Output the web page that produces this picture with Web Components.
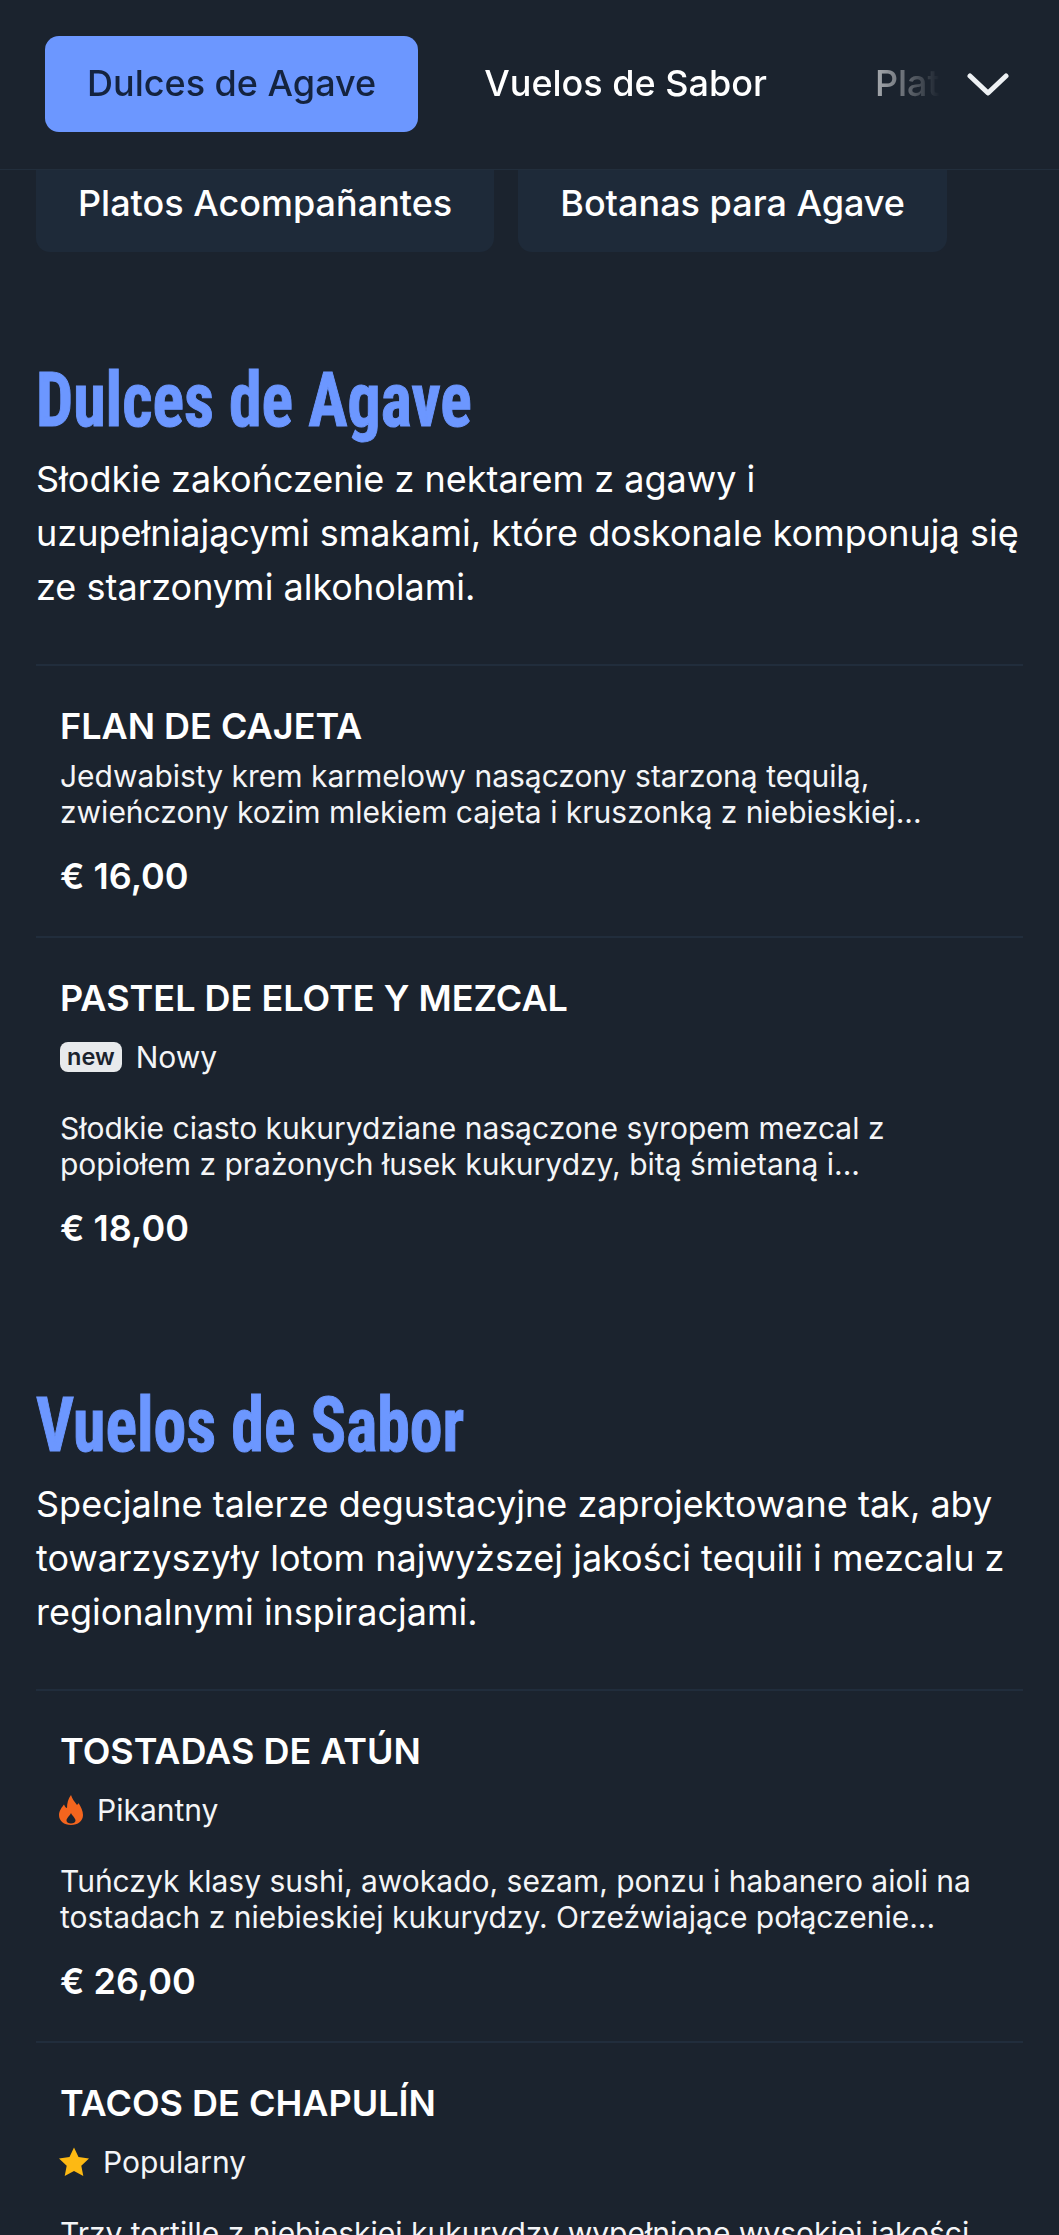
<!DOCTYPE html>
<html lang="pl"><head><meta charset="utf-8"><title>Menu</title>
<style>
html,body{margin:0;padding:0;background:#1b232e;height:2235px;overflow:hidden}
body{font-family:Inter,"Noto Sans",sans-serif;color:#fff}
</style></head><body>
<menu-page>
<nav-bar slot="nav">
  <nav-tab active>Dulces de Agave</nav-tab><nav-tab>Vuelos de Sabor</nav-tab><nav-tab>Platos Acompañantes</nav-tab>
</nav-bar>
<cat-chips slot="chips"><cat-chip>Platos Acompañantes</cat-chip><cat-chip>Botanas para Agave</cat-chip></cat-chips>
<menu-section heading="Dulces de Agave" intro="Słodkie zakończenie z nektarem z agawy i uzupełniającymi smakami, które doskonale komponują się ze starzonymi alkoholami.">
  <menu-item name="FLAN DE CAJETA" price="€ 16,00" desc="Jedwabisty krem karmelowy nasączony starzoną tequilą, zwieńczony kozim mlekiem cajeta i kruszonką z niebieskiej..."></menu-item>
  <menu-item name="PASTEL DE ELOTE Y MEZCAL" price="€ 18,00" tag="new" label="Nowy" desc="Słodkie ciasto kukurydziane nasączone syropem mezcal z popiołem z prażonych łusek kukurydzy, bitą śmietaną i..."></menu-item>
</menu-section>
<menu-section heading="Vuelos de Sabor" intro="Specjalne talerze degustacyjne zaprojektowane tak, aby towarzyszyły lotom najwyższej jakości tequili i mezcalu z regionalnymi inspiracjami.">
  <menu-item name="TOSTADAS DE ATÚN" price="€ 26,00" tag="fire" label="Pikantny" desc="Tuńczyk klasy sushi, awokado, sezam, ponzu i habanero aioli na tostadach z niebieskiej kukurydzy. Orzeźwiające połączenie..."></menu-item>
  <menu-item name="TACOS DE CHAPULÍN" price="€ 24,00" tag="star" label="Popularny" desc="Trzy tortille z niebieskiej kukurydzy wypełnione wysokiej jakości konikami polnymi, guacamole i salsą z chile morita..."></menu-item>
</menu-section>
</menu-page>
<script>
function def(name, html, init){
  customElements.define(name, class extends HTMLElement{
    constructor(){super();this.attachShadow({mode:'open'}).innerHTML=html;}
    connectedCallback(){ if(init) init(this,this.shadowRoot); }
  });
}
def('menu-page',`<style>
:host{display:block;position:relative;height:2235px;overflow:hidden;background:#1b232e}
.nav{position:absolute;left:0;top:0;right:0;z-index:2}
.body{padding:156px 36px 0}
</style><div class="nav"><slot name="nav"></slot></div><div class="body"><slot name="chips"></slot><slot></slot></div>`);
def('nav-bar',`<style>
:host{display:flex;align-items:center;height:169px;background:#1b232e;border-bottom:1px solid #222e3c;padding:0 0 0 45px}
.track{flex:1;min-width:0;display:flex;gap:24px;overflow:hidden;white-space:nowrap;margin-top:-2px;
 -webkit-mask-image:linear-gradient(90deg,#000 790px,transparent 895px);mask-image:linear-gradient(90deg,#000 790px,transparent 895px)}
svg{flex:none;width:42px;height:24px;margin:-2px 50px 0 27px;display:block}
</style><div class="track"><slot></slot></div><svg viewBox="0 0 42 24" fill="none" stroke="#eef1f4" stroke-width="5" stroke-linecap="round" stroke-linejoin="round"><path d="M3 4 L21 21 L39 4"/></svg>`);
def('nav-tab',`<style>
:host{flex:none;display:block;height:96px;padding:0 42px;border-radius:14px;font:500 36px/94px Inter,sans-serif;color:#fff}
:host([active]){background:#6c97ff;color:#14233f}
</style><slot></slot>`);
def('cat-chips',`<style>:host{display:flex;gap:24px;margin-bottom:11px}</style><slot></slot>`);
def('cat-chip',`<style>:host{display:block;flex:none;height:96px;padding:0 42px;border-radius:14px;background:#1e2a39;font:500 36px/94px Inter,sans-serif;color:#fff}</style><slot></slot>`);
def('menu-section',`<style>
:host{display:block;padding-top:93px}
h2{margin:0;color:#6c97ff;font:700 76px/88px "Liberation Sans Narrow","Roboto Condensed",sans-serif;-webkit-text-stroke:1px #6c97ff}
h2 span{display:inline-block;transform:scaleX(.866);transform-origin:0 50%;white-space:nowrap}
p{margin:8px 0 0;font:400 36px/54px Inter,sans-serif;color:#fff}
.items{margin-top:50px;border-top:2px solid #212d3c}
::slotted(menu-item:not(:first-child)){border-top:2px solid #212d3c}
</style><h2><span></span></h2><p></p><div class="items"><slot></slot></div>`,(el,r)=>{
  r.querySelector('h2 span').textContent=el.getAttribute('heading');
  r.querySelector('p').textContent=el.getAttribute('intro');
});
const ICONS={
 fire:`<svg width="24" height="30" viewBox="0 0 24 30"><path fill="#f4651e" fill-rule="evenodd" d="M12 0C13 4 16 7 18 10C19 9 19.500 8.500 19.500 8C22 12 24 16 24 20C24 26 19 30 12 30C5 30 0 26 0 20C0 16 3 12 5 9.500C6 12 7 13 8 13C8 8 9 4 12 0ZM12 18C13 20.500 16.500 23 16.500 25.500C16.500 27.500 14.500 28.500 12 28.500C9.500 28.500 7.500 27.500 7.500 25.500C7.500 23 11 20.500 12 18Z"/></svg>`,
 star:`<svg width="30" height="30" viewBox="0 0 30 30"><path fill="#fdb913" d="M15 0.500l4.500 9.600 10.500 1.400-7.700 7.200 2 10.300L15 23.900 5.700 29l2-10.300L0 11.500l10.500-1.400z"/></svg>`
};
def('menu-item',`<style>
:host{display:block;padding:33px 24px 33px}
h3{margin:0;font:600 36px/54px Inter,sans-serif;color:#fff}
.tag{display:flex;align-items:center;gap:14px;font:400 30px/48px Inter,sans-serif;margin-top:8px;margin-bottom:29px;color:#f4f5f7}
.tag svg{display:block;flex:none;margin-left:-1px}
.new{display:block;background:#e8eaec;color:#1b232e;font:600 23.5px/29px Inter,sans-serif;padding:0 7px 1px;border-radius:8px}
.d{margin:0;font:400 30px/36px Inter,sans-serif;color:#f4f5f7}
.nt{margin-top:5px}
.p{margin-top:19px;font:600 36px/54px Inter,sans-serif;color:#fff}
</style><h3></h3><div class="tag"></div><p class="d"></p><div class="p"></div>`,(el,r)=>{
  r.querySelector('h3').textContent=el.getAttribute('name');
  r.querySelector('.d').textContent=el.getAttribute('desc');
  r.querySelector('.p').textContent=el.getAttribute('price');
  const t=el.getAttribute('tag'),box=r.querySelector('.tag');
  if(t){
    box.innerHTML=(t==='new'?'<span class="new">new</span>':ICONS[t])+'<span></span>';
    box.lastChild.textContent=el.getAttribute('label');
  }else{box.style.display='none';r.querySelector('.d').classList.add('nt');}
});
</script>
</body></html>
